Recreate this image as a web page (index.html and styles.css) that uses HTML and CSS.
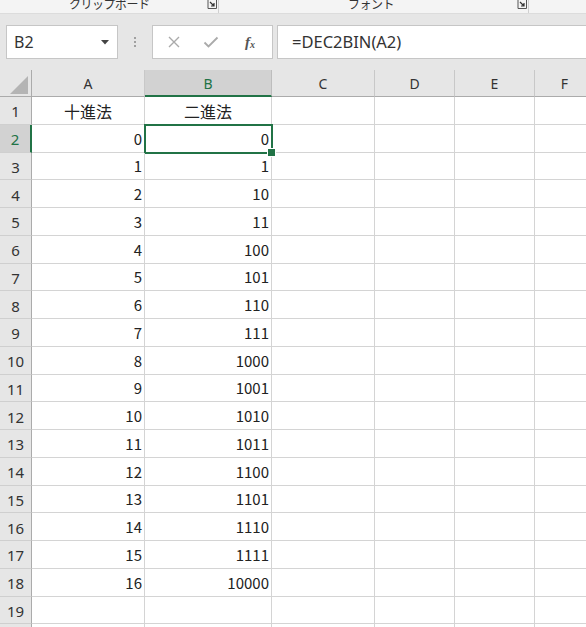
FILE: index.html
```html
<!DOCTYPE html>
<html lang="ja">
<head>
<meta charset="utf-8">
<link rel="stylesheet" href="styles.css">
</head>
<body>
<div class="app">
  <div class="ribbon">
    <div class="group g1">
      <span class="glabel">クリップボード</span>
      <svg class="launcher" width="10" height="10" viewBox="0 0 10 10"><path d="M1 0V8.5H9.5V0" fill="none" stroke="#555" stroke-width="1"/><path d="M3 2L7 6M7 3V6H4" fill="none" stroke="#333" stroke-width="1.2"/></svg>
    </div>
    <div class="group g2">
      <span class="glabel">フォント</span>
      <svg class="launcher" width="10" height="10" viewBox="0 0 10 10"><path d="M1 0V8.5H9.5V0" fill="none" stroke="#555" stroke-width="1"/><path d="M3 2L7 6M7 3V6H4" fill="none" stroke="#333" stroke-width="1.2"/></svg>
    </div>
  </div>
  <div class="toolbar">
    <div class="namebox">
      <span class="nbtext">B2</span>
      <svg class="dd" width="8" height="5" viewBox="0 0 8 5"><path d="M0 0H8L4 4.5Z" fill="#444"/></svg>
    </div>
    <div class="grip"><i></i><i></i><i></i></div>
    <div class="fxbox">
      <svg class="fxbtn" width="14" height="14" viewBox="0 0 14 14"><path d="M2 2L12 12M12 2L2 12" stroke="#aaa" stroke-width="1.4" fill="none"/></svg>
      <svg class="fxbtn" width="16" height="14" viewBox="0 0 16 14"><path d="M1.5 7.5L5.5 11.5L14.5 2.5" stroke="#aaa" stroke-width="1.8" fill="none"/></svg>
      <span class="fx">f<sub>x</sub></span>
    </div>
    <div class="formula">=DEC2BIN(A2)</div>
  </div>
  <div class="sheet">
    <div class="corner"><span class="tri"></span></div>
    <div class="ch">A</div>
    <div class="ch act">B</div>
    <div class="ch">C</div>
    <div class="ch">D</div>
    <div class="ch">E</div>
    <div class="ch">F</div>

    <div class="rh">1</div><div class="c ctr">十進法</div><div class="c ctr">二進法</div><div class="c"></div><div class="c"></div><div class="c"></div><div class="c"></div>
    <div class="rh act">2</div><div class="c num">0</div><div class="c num sel">0</div><div class="c"></div><div class="c"></div><div class="c"></div><div class="c"></div>
    <div class="rh">3</div><div class="c num">1</div><div class="c num">1</div><div class="c"></div><div class="c"></div><div class="c"></div><div class="c"></div>
    <div class="rh">4</div><div class="c num">2</div><div class="c num">10</div><div class="c"></div><div class="c"></div><div class="c"></div><div class="c"></div>
    <div class="rh">5</div><div class="c num">3</div><div class="c num">11</div><div class="c"></div><div class="c"></div><div class="c"></div><div class="c"></div>
    <div class="rh">6</div><div class="c num">4</div><div class="c num">100</div><div class="c"></div><div class="c"></div><div class="c"></div><div class="c"></div>
    <div class="rh">7</div><div class="c num">5</div><div class="c num">101</div><div class="c"></div><div class="c"></div><div class="c"></div><div class="c"></div>
    <div class="rh">8</div><div class="c num">6</div><div class="c num">110</div><div class="c"></div><div class="c"></div><div class="c"></div><div class="c"></div>
    <div class="rh">9</div><div class="c num">7</div><div class="c num">111</div><div class="c"></div><div class="c"></div><div class="c"></div><div class="c"></div>
    <div class="rh">10</div><div class="c num">8</div><div class="c num">1000</div><div class="c"></div><div class="c"></div><div class="c"></div><div class="c"></div>
    <div class="rh">11</div><div class="c num">9</div><div class="c num">1001</div><div class="c"></div><div class="c"></div><div class="c"></div><div class="c"></div>
    <div class="rh">12</div><div class="c num">10</div><div class="c num">1010</div><div class="c"></div><div class="c"></div><div class="c"></div><div class="c"></div>
    <div class="rh">13</div><div class="c num">11</div><div class="c num">1011</div><div class="c"></div><div class="c"></div><div class="c"></div><div class="c"></div>
    <div class="rh">14</div><div class="c num">12</div><div class="c num">1100</div><div class="c"></div><div class="c"></div><div class="c"></div><div class="c"></div>
    <div class="rh">15</div><div class="c num">13</div><div class="c num">1101</div><div class="c"></div><div class="c"></div><div class="c"></div><div class="c"></div>
    <div class="rh">16</div><div class="c num">14</div><div class="c num">1110</div><div class="c"></div><div class="c"></div><div class="c"></div><div class="c"></div>
    <div class="rh">17</div><div class="c num">15</div><div class="c num">1111</div><div class="c"></div><div class="c"></div><div class="c"></div><div class="c"></div>
    <div class="rh">18</div><div class="c num">16</div><div class="c num">10000</div><div class="c"></div><div class="c"></div><div class="c"></div><div class="c"></div>
    <div class="rh">19</div><div class="c"></div><div class="c"></div><div class="c"></div><div class="c"></div><div class="c"></div><div class="c"></div>
    <div class="rh"></div><div class="c"></div><div class="c"></div><div class="c"></div><div class="c"></div><div class="c"></div><div class="c"></div>
  </div>
</div>
</body>
</html>
```
FILE: styles.css
```css
* { box-sizing: border-box; }
html, body { margin: 0; padding: 0; }
body {
  width: 586px;
  height: 627px;
  overflow: hidden;
  background: #fff;
  font-family: "Noto Sans", "Noto Sans CJK JP", sans-serif;
  color: #222;
}
.app { width: 586px; height: 627px; overflow: hidden; display: flex; flex-direction: column; }

.ribbon {
  height: 14px;
  flex: none;
  background: #f4f4f4;
  border-bottom: 1px solid #dcdcdc;
  display: flex;
  overflow: hidden;
}
.group {
  display: flex;
  align-items: flex-start;
  height: 13px;
  border-right: 1px solid #d0d0d0;
  position: relative;
}
.g1 { width: 219px; padding-left: 69px; }
.g2 { width: 310px; padding-left: 129px; }
.glabel {
  font-family: "Noto Sans CJK JP", sans-serif;
  font-size: 12px;
  line-height: 12px;
  margin-top: -2px;
  color: #333;
  letter-spacing: -0.5px;
}
.launcher { margin-left: auto; margin-right: 1px; margin-top: 0; }

.toolbar {
  flex: none;
  height: 56px;
  background: #e6e6e6;
  display: flex;
  align-items: flex-start;
  padding: 11px 0 0 6px;
}
.namebox {
  width: 112px;
  height: 34px;
  background: #fff;
  border: 1px solid #c6c6c6;
  display: flex;
  align-items: center;
  padding: 0 8px 0 7px;
}
.nbtext { font-size: 16px; color: #333; }
.dd { margin-left: auto; }
.grip {
  width: 34px;
  height: 34px;
  display: flex;
  flex-direction: column;
  align-items: center;
  justify-content: center;
  gap: 2px;
}
.grip i { width: 2px; height: 2px; background: #a0a0a0; display: block; }
.fxbox {
  width: 121px;
  height: 34px;
  background: #fff;
  border: 1px solid #c6c6c6;
  display: flex;
  align-items: center;
  padding-left: 14px;
}
.fxbtn:first-child { margin-right: 22px; }
.fxbtn:nth-child(2) { margin-right: 26px; }
.fx {
  font-family: "Liberation Serif", serif;
  font-style: italic;
  font-weight: bold;
  font-size: 15px;
  color: #555;
  line-height: 1;
}
.fx sub { font-size: 10px; vertical-align: -1px; }
.formula {
  flex: 1;
  margin-left: 4px;
  height: 34px;
  background: #fff;
  border: 1px solid #c6c6c6;
  border-right: none;
  font-size: 16.5px;
  line-height: 31px;
  padding-left: 14px;
  color: #333;
}

.sheet {
  flex: 1;
  display: grid;
  grid-template-columns: 32px 113px 127px 103px 80px 80px 60px;
  grid-template-rows: 27px repeat(20, 27.75px);
  background: #fff;
}
.corner {
  background: #e6e6e6;
  border-right: 1px solid #ababab;
  border-bottom: 1px solid #ababab;
  position: relative;
}
.tri {
  position: absolute;
  right: 3px;
  bottom: 2px;
  width: 0;
  height: 0;
  border-left: 18px solid transparent;
  border-bottom: 18px solid #b4b4b4;
}
.ch {
  background: #e6e6e6;
  border-right: 1px solid #c8c8c8;
  border-bottom: 1px solid #ababab;
  display: flex;
  align-items: center;
  justify-content: center;
  font-size: 14px;
  color: #333;
  padding-top: 1px;
}
.ch.act {
  background: #d2d2d2;
  color: #217346;
  border-bottom: 2px solid #217346;
  border-right-color: #bdbdbd;
}
.rh {
  background: #e6e6e6;
  border-right: 1px solid #ababab;
  border-bottom: 1px solid #cfcfcf;
  display: flex;
  align-items: center;
  justify-content: center;
  font-size: 15px;
  color: #333;
  padding-top: 2px;
}
.rh.act {
  background: #d2d2d2;
  color: #217346;
  border-right: 2px solid #217346;
}
.c {
  border-right: 1px solid #d4d4d4;
  border-bottom: 1px solid #d4d4d4;
  display: flex;
  align-items: flex-end;
  font-family: "Noto Sans CJK JP", sans-serif;
  font-size: 15px;
  line-height: 20px;
  padding: 0 2px 3px 2px;
  color: #222;
  position: relative;
}
.c.num { justify-content: flex-end; }
.c.ctr { justify-content: center; font-size: 16px; }
.sel::after {
  content: "";
  position: absolute;
  left: -1px;
  top: -1px;
  right: -2px;
  bottom: -2px;
  border: 2px solid #217346;
}
.sel::before {
  content: "";
  position: absolute;
  right: -5px;
  bottom: -5px;
  width: 7px;
  height: 7px;
  background: #217346;
  border: 1px solid #fff;
  z-index: 2;
}
```
